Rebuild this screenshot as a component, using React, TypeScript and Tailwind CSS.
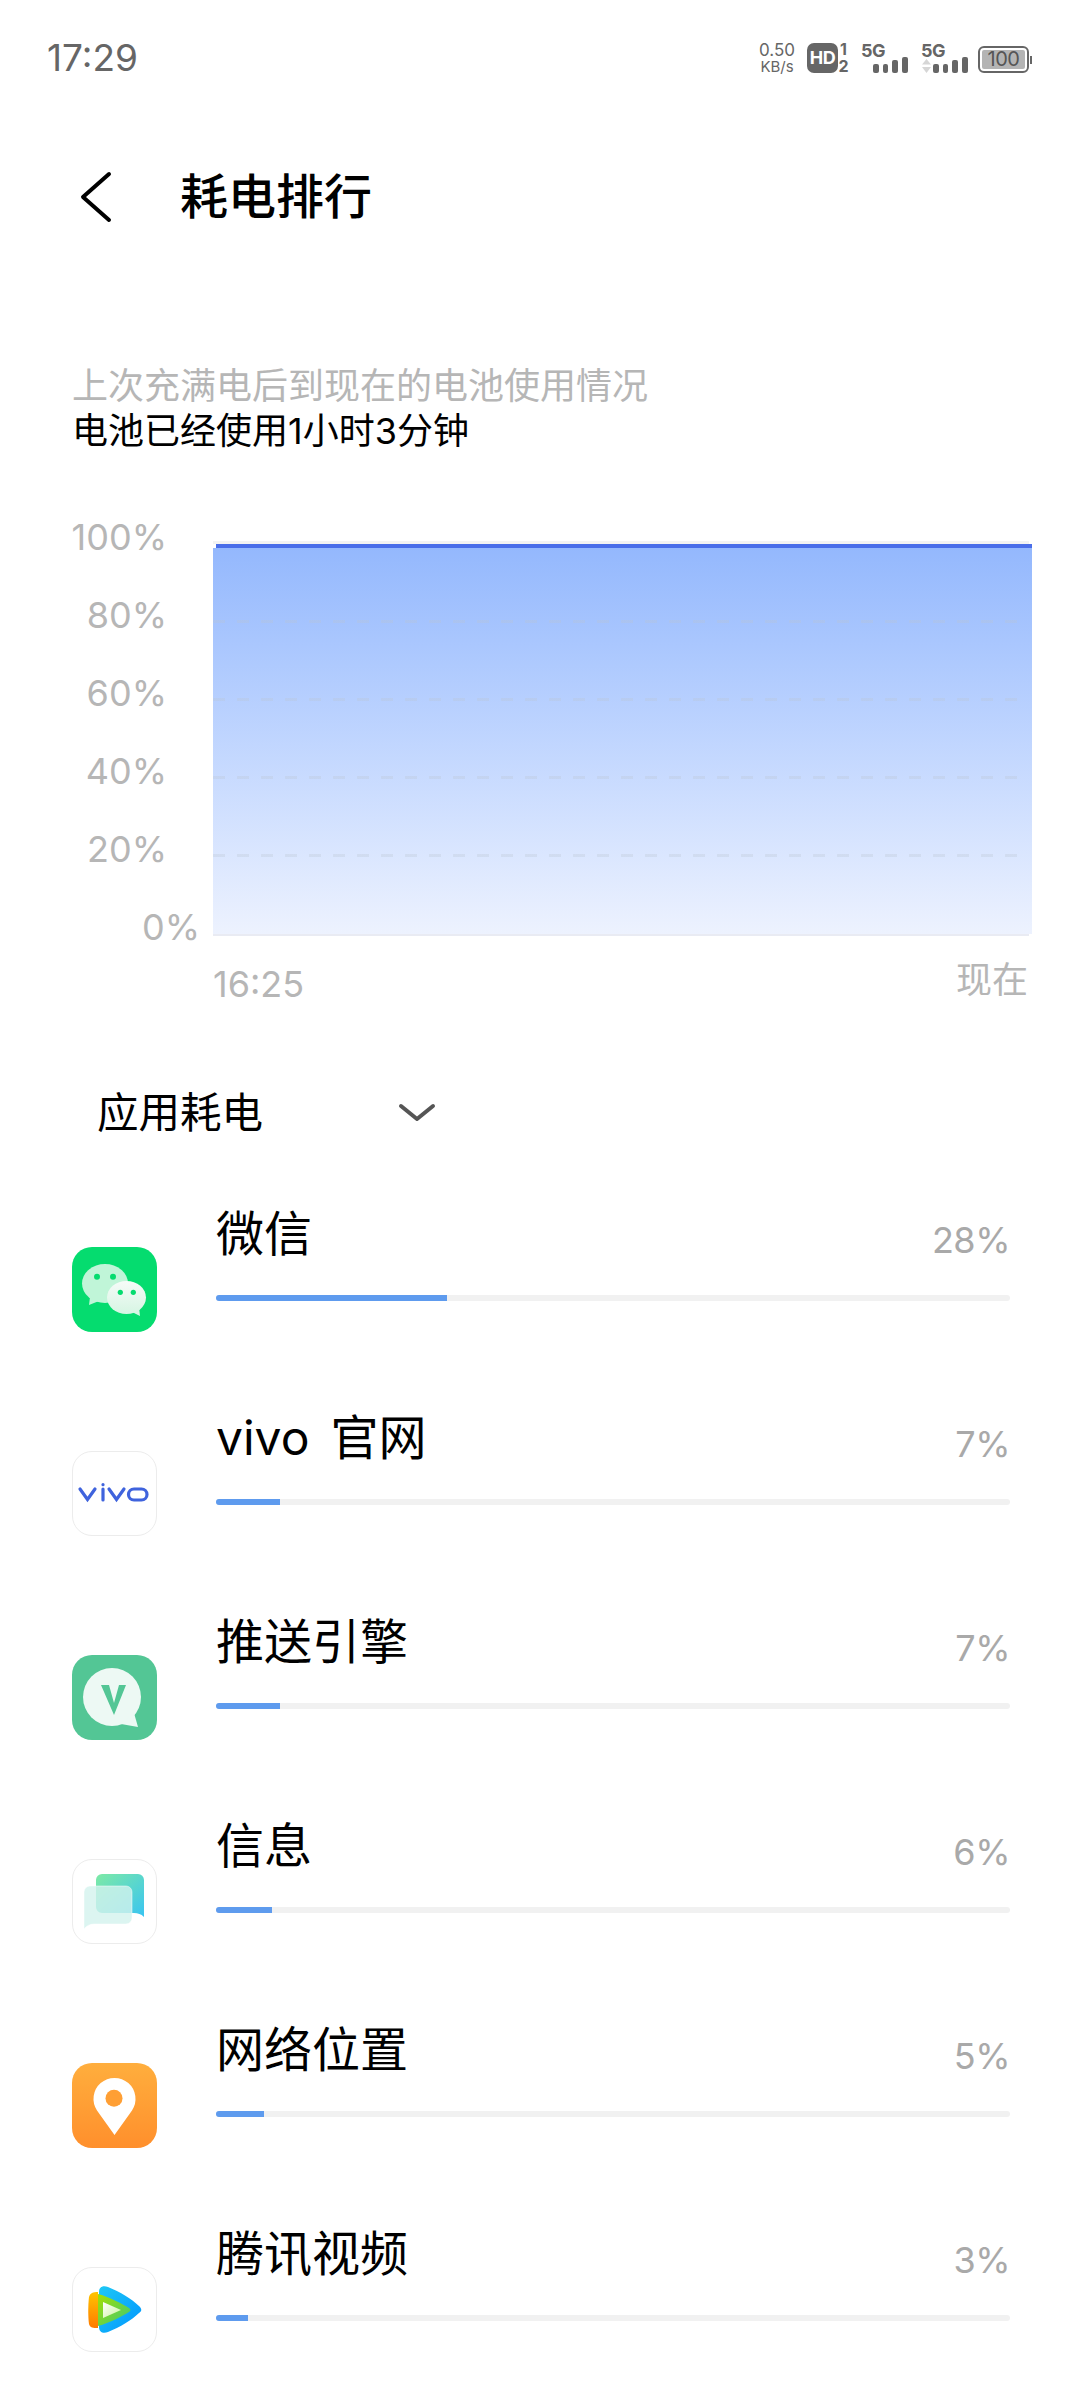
import type { ReactNode } from "react";

const fontStack = "font-['Inter','Noto_Sans_CJK_SC',sans-serif]";

function WeChatIcon() {
  return (
    <div className="w-[85px] h-[85px] rounded-[20px] bg-[#05dc6f]">
      <svg viewBox="0 0 85 85" className="w-[85px] h-[85px]">
        <defs>
          <linearGradient id="wxSmall" x1="0" y1="0" x2="0" y2="1">
            <stop offset="0" stopColor="#f6fbf8" />
            <stop offset="1" stopColor="#d6f5e3" />
          </linearGradient>
        </defs>
        <ellipse cx="33" cy="36.5" rx="23" ry="19.5" fill="#c0f5d8" />
        <path d="M18 50 L17 58 L27 54 Z" fill="#c0f5d8" />
        <circle cx="25" cy="29.7" r="3" fill="#05dc6f" />
        <circle cx="41" cy="29.7" r="3" fill="#05dc6f" />
        <path d="M58 64 L68 69 L67 60 Z" fill="#d6f5e3" />
        <ellipse cx="54.5" cy="50.5" rx="19.5" ry="16.5" fill="url(#wxSmall)" />
        <circle cx="48.3" cy="45.3" r="2.6" fill="#05dc6f" />
        <circle cx="61.3" cy="45.3" r="2.6" fill="#05dc6f" />
      </svg>
    </div>
  );
}

function VivoIcon() {
  return (
    <div className="w-[85px] h-[85px] rounded-[20px] border border-[#ececec]">
      <svg viewBox="1 1 83 83" className="w-[83px] h-[83px]" fill="none" stroke="#3f63dd" strokeWidth="3.2" strokeLinecap="round">
        <path d="M8 38 L15.5 48.5 L23 38" />
        <path d="M31 38 V49" />
        <circle cx="31" cy="33.7" r="1.6" fill="#3f63dd" stroke="none" />
        <path d="M37 38 L44.5 48.5 L52 38" />
        <rect x="56.5" y="38" width="18.5" height="11" rx="5.5" />
      </svg>
    </div>
  );
}

function PushIcon() {
  return (
    <div className="w-[85px] h-[85px] rounded-[20px] bg-[#53c695]">
      <svg viewBox="0 0 85 85" className="w-[85px] h-[85px]">
        <circle cx="40" cy="42" r="29" fill="#edf9f4" />
        <path d="M62 58 L66 72 L49 69 Z" fill="#edf9f4" />
        <path d="M29 30 H37 L42 48 L47 30 H54 L42 60 Z" fill="#53c695" />
      </svg>
    </div>
  );
}

function MessageIcon() {
  return (
    <div className="w-[85px] h-[85px] rounded-[20px] border border-[#ececec]">
      <svg viewBox="1 1 83 83" className="w-[83px] h-[83px]">
        <defs>
          <linearGradient id="msgBack" x1="0" y1="0" x2="1" y2="1">
            <stop offset="0" stopColor="#7eeaa5" />
            <stop offset="1" stopColor="#38c4f2" />
          </linearGradient>
        </defs>
        <path d="M24 21 a6 6 0 0 1 6 -6 h36 a6 6 0 0 1 6 6 v37 c-3 -3 -6 -4 -10 -4 h-32 a6 6 0 0 1 -6 -6 Z" fill="url(#msgBack)" />
        <path d="M12 33 a6 6 0 0 1 6 -6 h36 a6 6 0 0 1 6 6 v26 a6 6 0 0 1 -6 6 h-32 c-4 0 -8 2 -10 5 Z" fill="#d3f3ed" fillOpacity="0.8" stroke="#ffffff" strokeOpacity="0.7" strokeWidth="0.7" />
      </svg>
    </div>
  );
}

function LocationIcon() {
  return (
    <div className="w-[85px] h-[85px] rounded-[20px] bg-gradient-to-b from-[#ffae3d] to-[#ff8f2c]">
      <svg viewBox="0 0 85 85" className="w-[85px] h-[85px]">
        <path d="M42.5 72 L25 47.5 A21 21 0 1 1 60 47.5 Z" fill="#ffffff" />
        <circle cx="42" cy="35.3" r="8.5" fill="#ff9f34" />
      </svg>
    </div>
  );
}

function TencentVideoIcon() {
  return (
    <div className="w-[85px] h-[85px] rounded-[20px] border border-[#ececec]">
      <svg viewBox="1 1 83 83" className="w-[83px] h-[83px]">
        <defs>
          <linearGradient id="tvOrange" x1="0" y1="0" x2="0" y2="1">
            <stop offset="0" stopColor="#ffc400" />
            <stop offset="1" stopColor="#ff7a00" />
          </linearGradient>
          <linearGradient id="tvGreen" x1="0" y1="0" x2="1" y2="1">
            <stop offset="0" stopColor="#a5e000" />
            <stop offset="1" stopColor="#3cc878" />
          </linearGradient>
          <linearGradient id="tvBlue" x1="0" y1="0" x2="1" y2="1">
            <stop offset="0" stopColor="#1ec8f5" />
            <stop offset="1" stopColor="#0095ff" />
          </linearGradient>
          <linearGradient id="tvWhite" x1="0" y1="0" x2="1" y2="1">
            <stop offset="0" stopColor="#ffffff" />
            <stop offset="1" stopColor="#c9f29a" />
          </linearGradient>
        </defs>
        <path d="M27 25 c0 -5 4 -7 9 -5 c12 5 24 12 31 19 c3 3 3 5 0 7 c-7 7 -19 14 -31 19 c-5 2 -9 0 -9 -5 Z" fill="url(#tvBlue)" />
        <path d="M26 27 c12 3 24 10 31 14 c2 1 2 3 0 4 c-7 4 -19 11 -31 14 Z" fill="url(#tvGreen)" />
        <path d="M26 25 c-5 0 -8 1 -9 5 c-1 8 -1 20 0 27 c1 4 4 4 9 4 Z" fill="url(#tvOrange)" />
        <path d="M31 35 L49 43 L31 51 Z" fill="url(#tvWhite)" />
      </svg>
    </div>
  );
}

function Signal({ arrows }: { arrows?: boolean }) {
  return (
    <div className="w-[47px] h-[30px] relative">
      <span className="absolute left-0 -top-[1px] text-[18px] leading-[18px] font-bold tracking-[-0.5px]">5G</span>
      {arrows && (
        <svg viewBox="0 0 9 14" className="absolute left-[1px] bottom-0 w-[9px] h-[14px]" fill="#d6d6d6">
          <path d="M4.5 0 L9 5.5 H0 Z" />
          <path d="M4.5 14 L0 8 H9 Z" />
        </svg>
      )}
      <div className="absolute right-0 bottom-0 flex items-end gap-[4px]">
        <div className="w-[6px] h-[9px] rounded-[2px] bg-[#666666]" />
        <div className="w-[5px] h-[9px] rounded-[2px] bg-[#666666]" />
        <div className="w-[6px] h-[13px] rounded-[2px] bg-[#666666]" />
        <div className="w-[6px] h-[16px] rounded-[2px] bg-[#666666]" />
      </div>
    </div>
  );
}

function Battery() {
  return (
    <div className="flex items-center ml-[10px] mt-[3px]">
      <div className="w-[51px] h-[27px] rounded-[6px] border-[2px] border-[#666666] p-[2px]">
        <div className="w-full h-full rounded-[2px] bg-[#b4b4b4] text-[20px] leading-[19px] text-center text-[#555555] tracking-[-0.5px]">100</div>
      </div>
      <div className="w-[2px] h-[8px] ml-[1px] bg-[#666666]" />
    </div>
  );
}

function StatusBar() {
  return (
    <div className="h-[116px] pl-[47px] pr-[48px] flex items-center justify-between text-[#666666]">
      <span className="text-[37px] leading-[44px]">17:29</span>
      <div className="flex items-center h-[30px]">
        <div className="flex flex-col items-center w-[38px] -mt-[1px]">
          <span className="text-[17px] leading-[17px]">0.50</span>
          <span className="text-[15px] leading-[15px]">KB/s</span>
        </div>
        <div className="flex items-center ml-[11px]">
          <div className="w-[31px] h-[30px] rounded-[7px] bg-[#666666] text-white text-[18px] leading-[30px] font-bold text-center tracking-[-0.5px]">HD</div>
          <div className="flex flex-col items-center w-[11px] text-[16px] leading-[17px] font-bold">
            <span>1</span>
            <span>2</span>
          </div>
        </div>
        <div className="ml-[12px]">
          <Signal />
        </div>
        <div className="ml-[13px]">
          <Signal arrows />
        </div>
        <Battery />
      </div>
    </div>
  );
}

function BatteryChart() {
  const labels = ["100%", "80%", "60%", "40%", "20%", "0%"];
  const gridOffsets = [72, 150, 228, 306];

  return (
    <div className="mt-[68px]">
      <div className="flex items-start">
        <div className="w-[213px] shrink-0 flex flex-col gap-[48px]">
          {labels.map((label, index) => (
            <div
              key={label}
              className={
                index === 5
                  ? "h-[30px] text-[36px] leading-[30px] text-right pr-[13px] text-[#b6b6b6]"
                  : "h-[30px] text-[36px] leading-[30px] text-right pr-[46px] text-[#b6b6b6]"
              }
            >
              {label}
            </div>
          ))}
        </div>
        <div className="w-[819px] h-[395px] mt-[19px] flex flex-col">
          <div className="h-[3px] mr-[3px] bg-[#f3f3f3]" />
          <div className="h-[4px] ml-[3px] bg-[#4a6ee9]" />
          <div className="flex-1 relative bg-gradient-to-b from-[#94b8fd] to-[#edf2fe]">
            {gridOffsets.map((offset) => (
              <div
                key={offset}
                className="absolute left-0 w-[804px] h-[3px] bg-[repeating-linear-gradient(90deg,rgba(186,196,209,0.3)_0px,rgba(186,196,209,0.3)_12px,transparent_12px,transparent_24px)]"
                style={{ top: offset }}
              />
            ))}
          </div>
          <div className="h-[2px] mr-[3px] bg-[#e9ebf3]" />
        </div>
      </div>
      <div className="flex justify-between items-start pl-[213px] pr-[52px] mt-[16px] text-[36px] leading-[44px] text-[#b6b6b6]">
        <span className="pt-[4px]">16:25</span>
        <span>现在</span>
      </div>
    </div>
  );
}

interface AppRow {
  name: string;
  percent: number;
  barWidth: number;
  icon: ReactNode;
}

const rows: AppRow[] = [
  { name: "微信", percent: 28, barWidth: 231, icon: <WeChatIcon /> },
  { name: "vivo  官网", percent: 7, barWidth: 64, icon: <VivoIcon /> },
  { name: "推送引擎", percent: 7, barWidth: 64, icon: <PushIcon /> },
  { name: "信息", percent: 6, barWidth: 56, icon: <MessageIcon /> },
  { name: "网络位置", percent: 5, barWidth: 48, icon: <LocationIcon /> },
  { name: "腾讯视频", percent: 3, barWidth: 32, icon: <TencentVideoIcon /> },
];

function UsageRow({ row }: { row: AppRow }) {
  return (
    <div className="h-[204px] flex pl-[72px] pr-[70px]">
      <div className="w-[144px] shrink-0 pt-[43px]">{row.icon}</div>
      <div className="flex-1">
        <div className="flex justify-between items-start h-[60px]">
          <span className="text-[48px] leading-[60px] text-black whitespace-pre [word-spacing:-3px]">{row.name}</span>
          <span className="text-[36px] leading-[60px] pt-[6px] text-[#a9a9a9] tracking-[-0.5px]">{row.percent}%</span>
        </div>
        <div className="mt-[31px] h-[6px] rounded-full bg-[#f1f1f1] overflow-hidden">
          <div className="h-full bg-[#5e9bee]" style={{ width: row.barWidth }} />
        </div>
      </div>
    </div>
  );
}

export default function App() {
  return (
    <div className={`w-[1080px] h-[2400px] bg-white overflow-hidden ${fontStack}`}>
      <StatusBar />

      {/* Title bar */}
      <div className="h-[72px] mt-[45px] flex items-center pl-[80px]">
        <svg viewBox="0 0 32 52" className="w-[32px] h-[52px]" fill="none" stroke="#000000" strokeWidth="4" strokeLinecap="round" strokeLinejoin="round">
          <path d="M29 3 L3 26 L29 49" />
        </svg>
        <h1 className="ml-[68px] text-[48px] font-medium text-black">耗电排行</h1>
      </div>

      {/* Summary */}
      <div className="mt-[132px] pl-[72px] text-[36px]">
        <p className="leading-[43px] text-[#b6b6b6]">上次充满电后到现在的电池使用情况</p>
        <p className="leading-[46px] text-black">电池已经使用1小时3分钟</p>
      </div>

      <BatteryChart />

      {/* Section dropdown */}
      <div className="mt-[77px] pl-[97px] flex items-center h-[60px]">
        <span className="text-[41.5px] leading-[60px] text-black w-[301px]">应用耗电</span>
        <svg viewBox="0 0 38 20" className="w-[38px] h-[20px]" fill="none" stroke="#555555" strokeWidth="4" strokeLinecap="round" strokeLinejoin="round">
          <path d="M3 3 L19 16 L35 3" />
        </svg>
      </div>

      <div className="mt-[61px]">
        {rows.map((row) => (
          <UsageRow key={row.name} row={row} />
        ))}
      </div>
    </div>
  );
}
